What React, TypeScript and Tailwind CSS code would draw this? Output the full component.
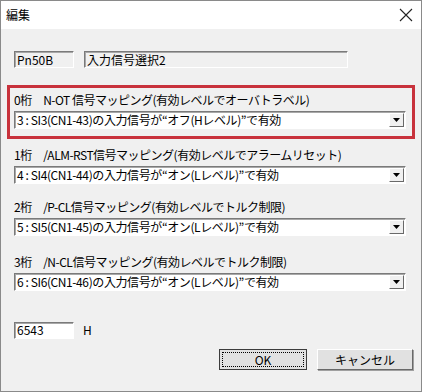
import React from 'react';

const font = { fontFamily: '"Noto Sans CJK JP", "Liberation Sans", sans-serif' };

const sunken =
  'border border-t-[#7a7a7a] border-l-[#7a7a7a] border-b-white border-r-white shadow-[inset_1px_1px_0_#a8a8a8]';

interface Group {
  label: string;
  value: string;
  mt: string;
}

const groups: Group[] = [
  { label: '0桁　N-OT 信号マッピング(有効レベルでオーバトラベル)', value: '3 : SI3(CN1-43)の入力信号が“オフ(Hレベル)”で有効', mt: '' },
  { label: '1桁　/ALM-RST信号マッピング(有効レベルでアラームリセット)', value: '4 : SI4(CN1-44)の入力信号が“オン(Lレベル)”で有効', mt: 'mt-[9px]' },
  { label: '2桁　/P-CL信号マッピング(有効レベルでトルク制限)', value: '5 : SI5(CN1-45)の入力信号が“オン(Lレベル)”で有効', mt: 'mt-[16px]' },
  { label: '3桁　/N-CL信号マッピング(有効レベルでトルク制限)', value: '6 : SI6(CN1-46)の入力信号が“オン(Lレベル)”で有効', mt: 'mt-[19px]' },
];

function Combo({ value }: { value: string }) {
  return (
    <div className={`mt-[4px] flex h-[18px] w-[392px] items-center bg-white ${sunken}`}>
      <span className="flex-1 pl-[2px] text-[12px] leading-[14px] tracking-[-0.4px] whitespace-nowrap">{value}</span>
      <div className="mr-[1px] flex h-[14px] w-[15px] items-center justify-center border border-t-white border-l-white border-b-[#696969] border-r-[#696969] bg-[#f0f0f0]">
        <svg width="7" height="4" viewBox="0 0 7 4">
          <path d="M0 0h7L3.5 4z" fill="#000" />
        </svg>
      </div>
    </div>
  );
}

function Field({ group }: { group: Group }) {
  return (
    <div className={group.mt}>
      <div className="h-[14px] text-[12px] leading-[14px] tracking-[-0.5px] whitespace-nowrap">{group.label}</div>
      <Combo value={group.value} />
    </div>
  );
}

export default function App() {
  return (
    <div
      className="flex h-[392px] w-[422px] flex-col border border-[#8a8a8a] bg-[#f0f0f0] text-black"
      style={font}
    >
      {/* title bar */}
      <div className="flex h-[28px] items-center justify-between bg-white pl-[5px] pr-[8px]">
        <span className="text-[12px]">編集</span>
        <svg width="14" height="14" viewBox="0 0 14 14">
          <path d="M1 1l12 12M13 1L1 13" stroke="#222" strokeWidth="1.1" />
        </svg>
      </div>

      <div className="flex flex-col pl-[13px]">
        <div className="mt-[22px] flex gap-[10px]">
          <div className={`flex h-[17px] w-[60px] items-center pl-[2px] text-[12px] leading-[14px] ${sunken}`}>Pn50B</div>
          <div className={`flex h-[17px] w-[264px] items-center pl-[2px] text-[12px] leading-[14px] ${sunken}`}>入力信号選択2</div>
        </div>

        <div className="-ml-[7px] mt-[17px] w-[408px] border-[3px] border-[#c8323c] pb-[7px] pl-[4px] pt-[5px]">
          <Field group={groups[0]} />
        </div>

        {groups.slice(1).map((g) => (
          <Field key={g.label} group={g} />
        ))}

        <div className="mt-[30px] flex items-center gap-[9px]">
          <div className={`flex h-[17px] w-[60px] items-center bg-white pl-[2px] text-[12px] leading-[14px] ${sunken}`}>6543</div>
          <span className="text-[12px]">H</span>
        </div>

        <div className="mt-[10px] flex justify-end gap-[10px] pr-[8px]">
          <div className="flex h-[21px] w-[88px] items-center justify-center border border-[#3c3c3c] bg-[#e1e1e1] p-[2px]">
            <div className="flex h-full w-full items-center justify-center border border-dotted border-black text-[12px]">OK</div>
          </div>
          <div className="flex h-[21px] w-[96px] items-center justify-center border border-t-white border-l-white border-b-[#696969] border-r-[#696969] bg-[#e1e1e1] text-[12px] shadow-[1px_1px_0_#a0a0a0]">
            キャンセル
          </div>
        </div>
      </div>
    </div>
  );
}
